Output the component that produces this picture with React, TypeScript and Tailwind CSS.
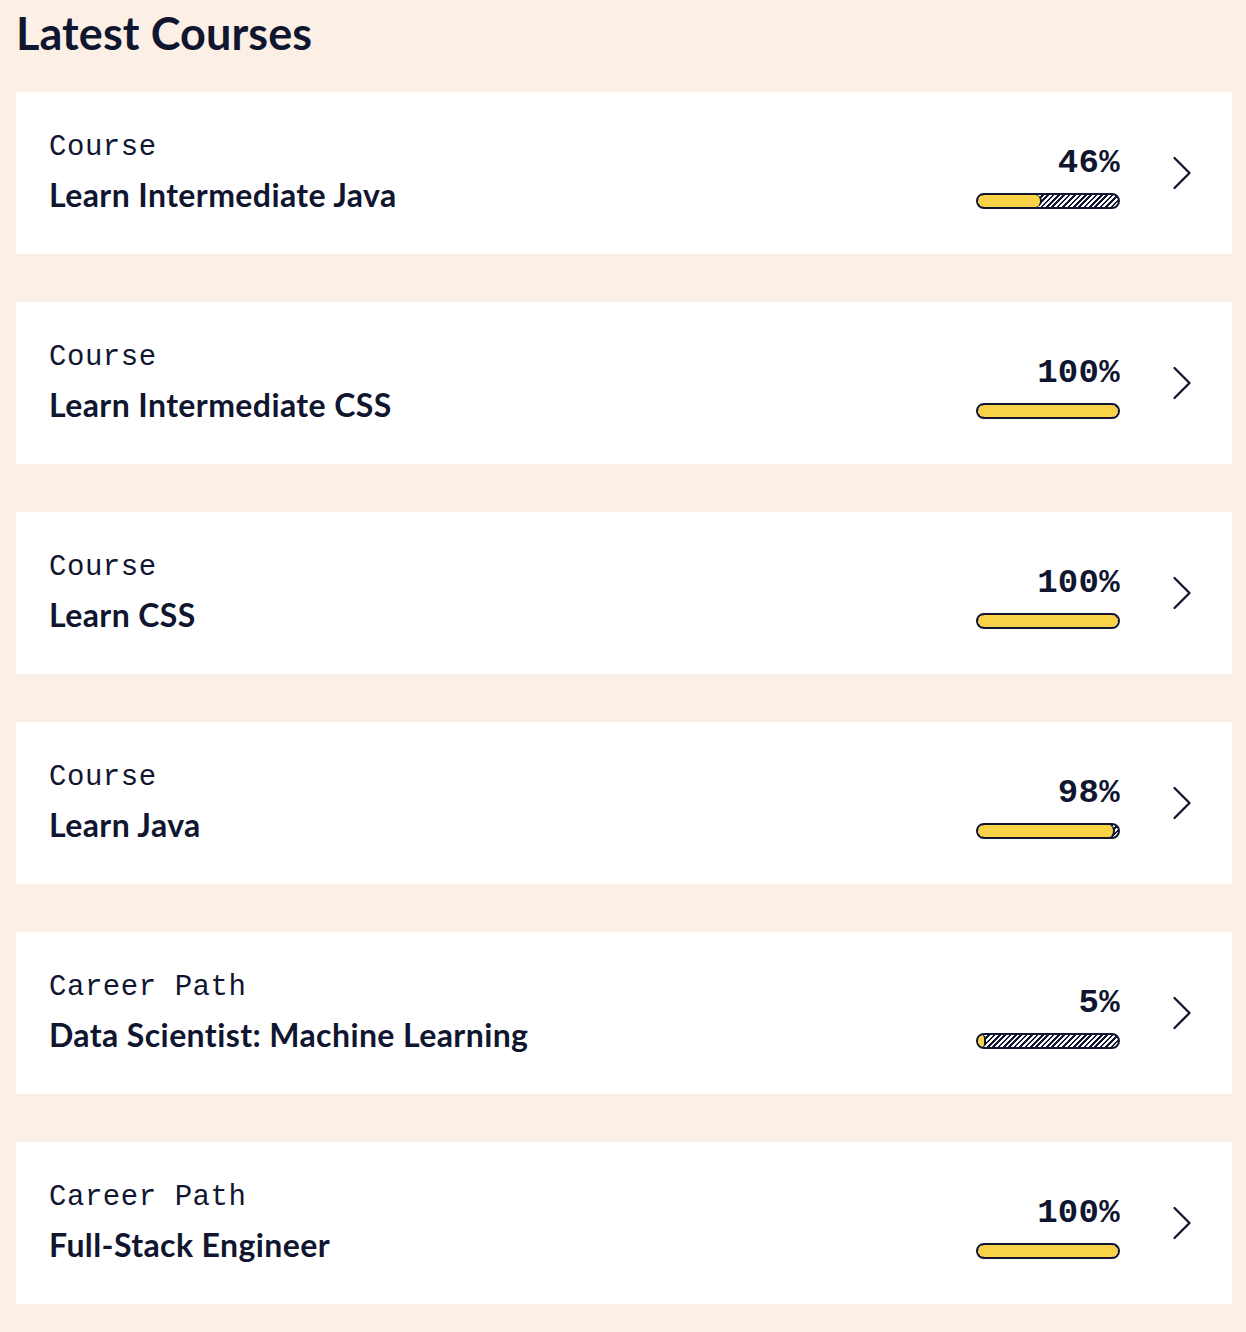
import React from "react";

type Item = { kind: string; title: string; pct: number };

const items: Item[] = [
  { kind: "Course", title: "Learn Intermediate Java", pct: 46 },
  { kind: "Course", title: "Learn Intermediate CSS", pct: 100 },
  { kind: "Course", title: "Learn CSS", pct: 100 },
  { kind: "Course", title: "Learn Java", pct: 98 },
  { kind: "Career Path", title: "Data Scientist: Machine Learning", pct: 5 },
  { kind: "Career Path", title: "Full-Stack Engineer", pct: 100 },
];

function Chevron() {
  return (
    <svg width="20" height="34" viewBox="0 0 20 34" fill="none" className="shrink-0">
      <polyline
        points="2.5,2 17.5,17 2.5,32"
        stroke="#10162f"
        strokeWidth="2.3"
        strokeLinecap="round"
        strokeLinejoin="round"
      />
    </svg>
  );
}

function Bar({ pct }: { pct: number }) {
  return (
    <div className="h-[16px] w-[144px] rounded-full border-2 border-[#10162f] overflow-hidden bg-[image:repeating-linear-gradient(-45deg,#10162f_0px,#10162f_1.8px,#ffffff_1.8px,#ffffff_3.8px)]">
      <div
        className={
          "h-full rounded-full bg-[#f8d348] " +
          (pct < 100 ? "border-r-2 border-[#10162f]" : "")
        }
        style={{ width: `${Math.max(pct, 6)}%` }}
      />
    </div>
  );
}

export default function App() {
  return (
    <div className="min-h-[1332px] bg-[#fcf0e6] pl-4 pr-[14px] pb-[28px] text-[#10162f]">
      <h1 className="pt-[7px] mb-[33px] font-['Lato',sans-serif] text-[45px] font-bold leading-[52px] tracking-[0.1px]">
        Latest Courses
      </h1>
      <div className="flex flex-col gap-[48px]">
        {items.map((it, i) => (
          <div key={i} className="flex h-[162px] items-start bg-white pl-[33px] pr-[40px]">
            <div className="flex flex-1 flex-col pt-[38px]">
              <div className="font-['Liberation_Mono',monospace] text-[29px] leading-[36px] tracking-[0.55px]">
                {it.kind}
              </div>
              <div className="mt-[11px] font-['Lato',sans-serif] text-[32px] font-bold leading-[36px] tracking-[0.4px]">
                {it.title}
              </div>
            </div>
            <div className="flex w-[144px] flex-col items-end pt-[53px]">
              <div className="font-['Liberation_Mono',monospace] text-[34px] font-bold leading-[36px] tracking-[0.3px]">
                {it.pct}%
              </div>
              <div className="mt-[12px]">
                <Bar pct={it.pct} />
              </div>
            </div>
            <div className="ml-[52px] self-center">
              <Chevron />
            </div>
          </div>
        ))}
      </div>
    </div>
  );
}
